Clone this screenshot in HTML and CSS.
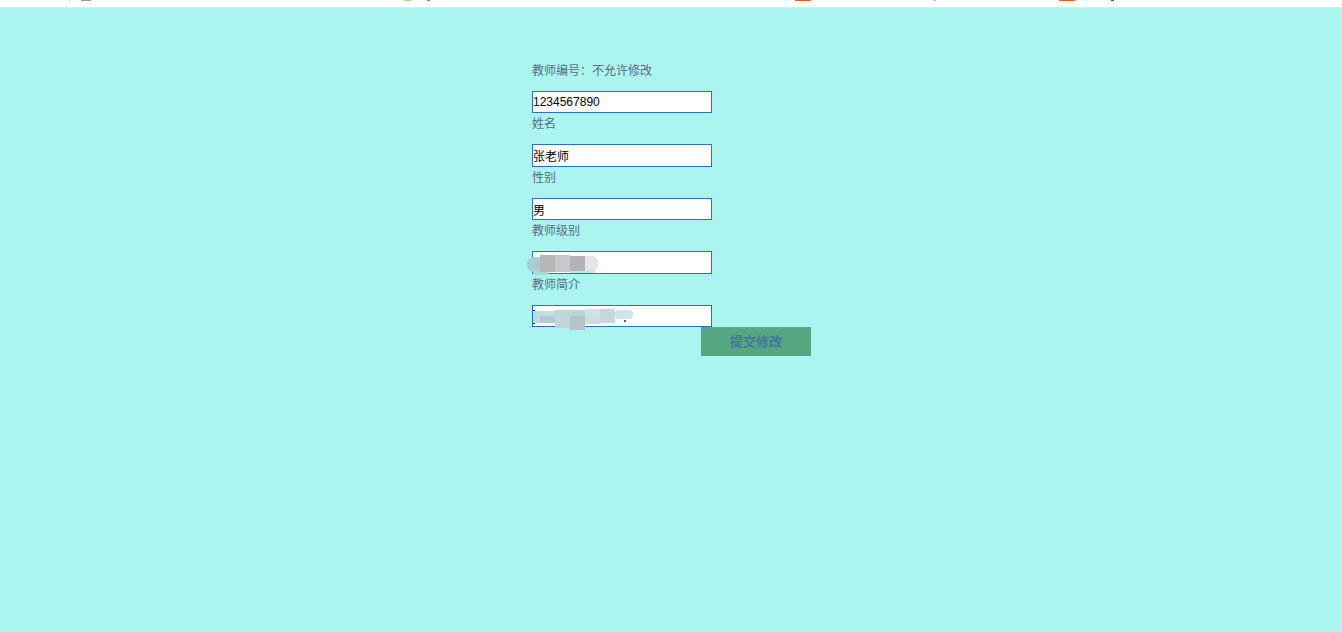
FILE: index.html
```html
<!DOCTYPE html>
<html lang="zh">
<head>
  <meta charset="UTF-8">
  <title>修改教师信息</title>
  <link rel="stylesheet" href="styles.css">
</head>
<body>
  <div class="topbar">
    <span class="tick tick-dot"></span>
    <span class="tick tick-grey"></span>
    <span class="tick tick-green"></span>
    <span class="tick tick-orange"></span>
    <span class="tick tick-red"></span>
    <span class="tick tick-blue"></span>
    <span class="tick tick-red2"></span>
    <span class="tick tick-dark"></span>
  </div>
  <form class="edit-form">
    <div class="form-group first">
      <label>教师编号：不允许修改</label>
      <input type="text" value="1234567890">
    </div>
    <div class="form-group">
      <label>姓名</label>
      <input type="text" value="张老师">
    </div>
    <div class="form-group">
      <label>性别</label>
      <input type="text" value="男">
    </div>
    <div class="form-group">
      <label>教师级别</label>
      <div class="blur-wrap">
        <input type="text">
        <svg class="blur blur-level" width="74" height="26" viewBox="0 0 74 26">
          <rect x="1" y="6" width="18" height="15" rx="7" fill="#a9cdd2"/>
          <rect x="7" y="20" width="16" height="4" rx="2" fill="#a9d8dc"/>
          <rect x="44" y="19" width="25" height="3" rx="1" fill="#bde5e6"/>
          <rect x="60" y="5" width="12" height="15" rx="6" fill="#e3e6e4"/>
          <rect x="59" y="5" width="8" height="15" fill="#e3e6e4"/>
          <rect x="14" y="4" width="15" height="17" fill="#b8b5b8"/>
          <rect x="29" y="4" width="15" height="17" fill="#c6c9c8"/>
          <rect x="44" y="5" width="15" height="15" fill="#b4b2b8"/>
        </svg>
      </div>
    </div>
    <div class="form-group">
      <label>教师简介</label>
      <div class="blur-wrap">
        <input type="text">
        <svg class="blur blur-intro" width="104" height="28" viewBox="0 0 104 28">
          <rect x="1" y="5" width="2" height="1" fill="#222"/>
          <rect x="1" y="18" width="2" height="1" fill="#222"/>
          <rect x="92" y="15" width="2" height="2" fill="#555"/>
          <rect x="1" y="6" width="9" height="12" rx="2" fill="#b9dde2"/>
          <rect x="8" y="6" width="15" height="5" fill="#bfe0e3"/>
          <rect x="8" y="11" width="15" height="7" fill="#b5c9cf"/>
          <rect x="23" y="5" width="15" height="18" fill="#c3d4da"/>
          <rect x="38" y="5" width="15" height="6" fill="#bcd5d8"/>
          <rect x="38" y="11" width="15" height="14" fill="#b2c5ca"/>
          <rect x="53" y="4" width="15" height="6" fill="#cfe5e9"/>
          <rect x="53" y="10" width="15" height="9" fill="#cbdde2"/>
          <rect x="68" y="4" width="15" height="14" fill="#c8d7db"/>
          <rect x="83" y="5" width="18" height="9" rx="4" fill="#cfe5ea"/>
        </svg>
      </div>
    </div>
    <div class="submit-row">
      <button type="button" class="btn">提交修改</button>
    </div>
  </form>
</body>
</html>
```

FILE: styles.css
```css
body {
  margin: 0;
  height: 632px;
  overflow: hidden;
  background-color: #abf4f0;
  font-family: "Liberation Sans", "Noto Sans CJK SC", sans-serif;
  font-size: 12px;
}
.topbar {
  position: relative;
  height: 7px;
  background-color: #fff;
  border-bottom: 1px solid #e6e6e6;
}
.tick {
  position: absolute;
  top: 0;
  height: 1px;
}
.tick-dot { left: 69px; width: 1px; background-color: #bbb; }
.tick-grey { left: 81px; width: 10px; background-color: #999; }
.tick-green { left: 404px; width: 7px; background-color: #a5dd7a; }
.tick-orange { left: 427px; width: 3px; background-color: #c77a20; }
.tick-red { left: 795px; width: 16px; background-color: #f4572b; }
.tick-blue { left: 933px; width: 3px; background-color: #90d0f5; }
.tick-red2 { left: 1059px; width: 16px; background-color: #f4572b; }
.tick-dark { left: 1111px; width: 3px; background-color: #555; }
.edit-form {
  width: 279px;
  margin-left: 532px;
  padding-top: 52px;
}
.form-group label {
  display: block;
  line-height: 22px;
  margin-bottom: 9px;
  color: #5c6c78;
}
.form-group.first label {
  margin-bottom: 8.75px;
}
.form-group input {
  display: block;
  width: 180px;
  height: 22.5px;
  padding: 0;
  margin: 0;
  box-sizing: border-box;
  border: 1px solid #2a70c8;
  border-radius: 0;
  background-color: #fff;
  color: #000;
  font-family: inherit;
  font-size: 12px;
  outline: none;
}
.blur-wrap {
  position: relative;
}
.blur {
  position: absolute;
  top: 0;
}
.blur-level {
  left: -6px;
}
.blur-intro {
  left: 0;
}
.submit-row {
  display: flex;
  justify-content: flex-end;
}
.btn {
  width: 110px;
  height: 29px;
  padding: 0 0 2px;
  border: none;
  background-color: #54a780;
  color: #4276a0;
  font-family: inherit;
  font-size: 13px;
  font-weight: bold;
}
```
